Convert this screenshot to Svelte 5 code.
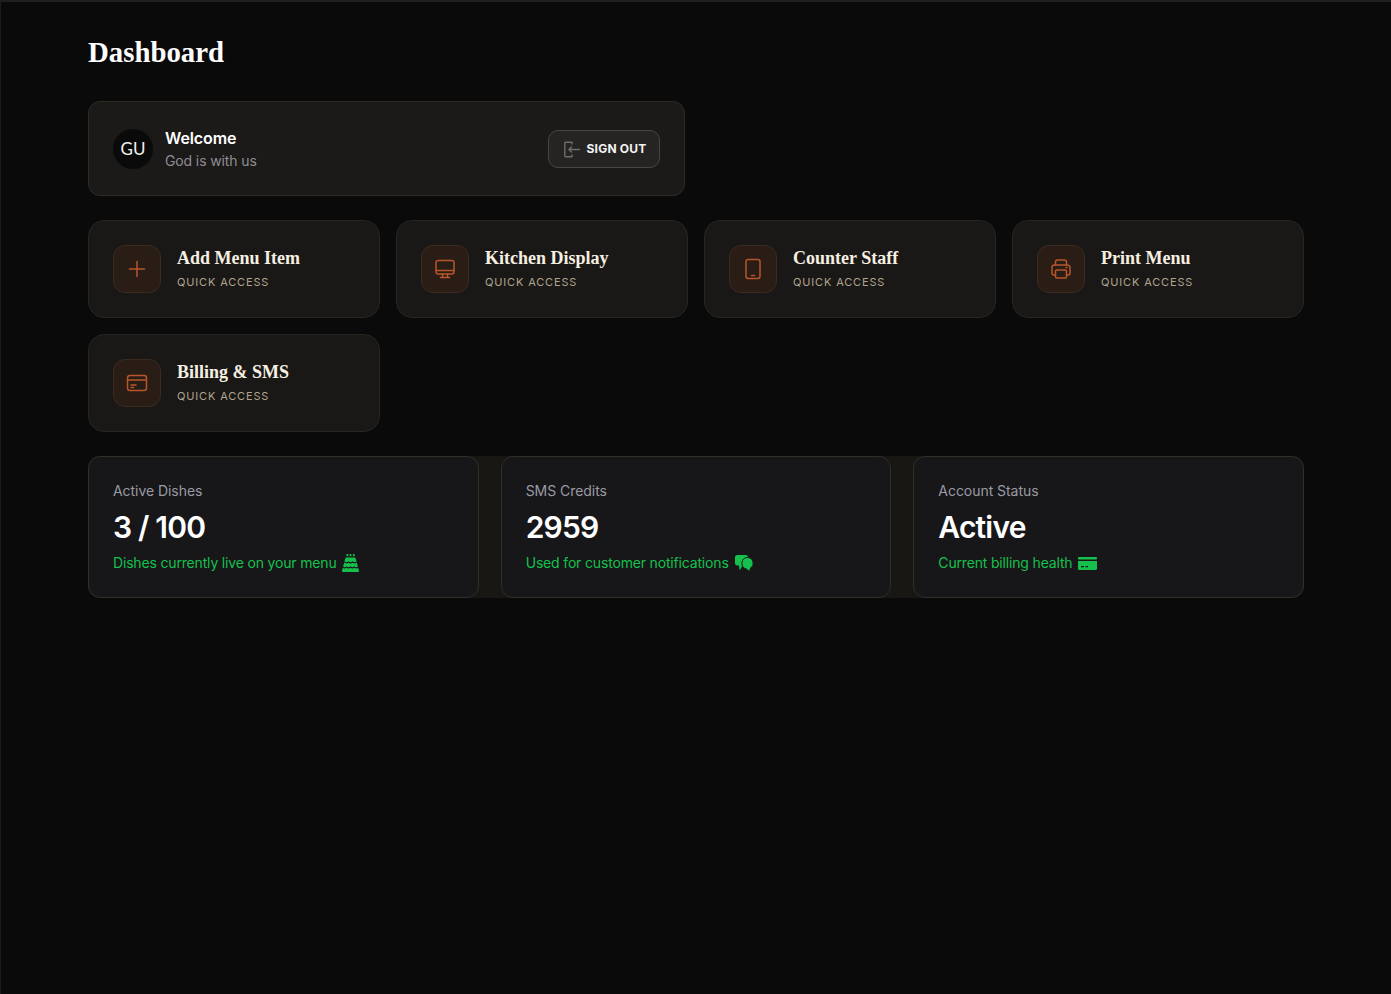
<script lang="ts">
	type Action = { title: string; icon: string };
	type Stat = { label: string; value: string; note: string; icon: string };

	const actions: Action[] = [
		{ title: 'Add Menu Item', icon: 'plus' },
		{ title: 'Kitchen Display', icon: 'monitor' },
		{ title: 'Counter Staff', icon: 'tablet' },
		{ title: 'Print Menu', icon: 'printer' },
		{ title: 'Billing & SMS', icon: 'card' }
	];

	const stats: Stat[] = [
		{ label: 'Active Dishes', value: '3 / 100', note: 'Dishes currently live on your menu', icon: 'cake' },
		{ label: 'SMS Credits', value: '2959', note: 'Used for customer notifications', icon: 'chat' },
		{ label: 'Account Status', value: 'Active', note: 'Current billing health', icon: 'billing' }
	];
</script>

<main class="page">
	<h1>Dashboard</h1>

	<section class="welcome">
		<div class="user">
			<div class="avatar">GU</div>
			<div>
				<div class="hello">Welcome</div>
				<div class="sub">God is with us</div>
			</div>
		</div>
		<button class="signout">
			<svg width="20" height="20" viewBox="0 0 20 20" fill="none" stroke="#6f6d6b" stroke-width="1.4" stroke-linecap="round" stroke-linejoin="round">
				<path d="M10 5V3.2H3.6a.8.8 0 0 0-.8.8v13a.8.8 0 0 0 .8.8H10V16" />
				<path d="M17.5 10.5H7M9.5 8l-2.6 2.5L9.5 13" />
			</svg>
			SIGN OUT
		</button>
	</section>

	<section class="actions">
		{#each actions as action}
			<div class="action">
				<div class="action-icon">
					<svg width="24" height="24" viewBox="0 0 24 24" fill="none" stroke="currentColor" stroke-width="1.5" stroke-linecap="round" stroke-linejoin="round">
						{#if action.icon === 'plus'}
							<path d="M12 4.5v15M4.5 12h15" />
						{:else if action.icon === 'monitor'}
							<rect x="3" y="3.5" width="18" height="13.5" rx="2.2" />
							<path d="M3 13.5h18M9.5 17v3M14.5 17v3M7.5 20.5h9" />
						{:else if action.icon === 'tablet'}
							<rect x="5" y="2.5" width="14" height="19" rx="2.2" />
							<path d="M10.5 18.5h3" />
						{:else if action.icon === 'printer'}
							<path d="M6.5 8V5a2 2 0 0 1 2-2h7a2 2 0 0 1 2 2v3" />
							<path d="M6.5 18H5a2 2 0 0 1-2-2v-5.5A2.5 2.5 0 0 1 5.5 8h13a2.5 2.5 0 0 1 2.5 2.5V16a2 2 0 0 1-2 2h-1.500" />
							<rect x="6.5" y="13" width="11" height="8" rx="1" />
							<path d="M17 10.5h1" />
						{:else}
							<rect x="2.5" y="4.5" width="19" height="15" rx="2.5" />
							<path d="M2.5 9h19M6 14h5M6 16.5h2.5" />
						{/if}
					</svg>
				</div>
				<div class="action-text">
					<div class="action-title">{action.title}</div>
					<div class="action-sub">QUICK ACCESS</div>
				</div>
			</div>
		{/each}
	</section>

	<section class="stats">
		{#each stats as stat}
			<div class="stat">
				<div class="stat-label">{stat.label}</div>
				<div class="stat-value">{stat.value}</div>
				<div class="stat-note">
					{stat.note}
					<svg width="20" height="20" viewBox="0 0 20 20" fill="#16c04c">
						{#if stat.icon === 'cake'}
							<path d="M5.500 1h1.700v2.300H5.500zM8.700 1h1.700v2.300H8.700zM11.900 1h1.700v2.300h-1.700z" />
							<path d="M5.500 4.500h8c.6 0 1 .4 1.200 1l3.100 11.500V19H1.200v-2L4.300 5.500c.2-.6.600-1 1.200-1z" />
							<path d="M3.500 9c1.500 1.100 2.700 1.100 4 0 1.300 1.100 2.700 1.100 4 0 1.300 1.100 2.500 1.100 4 0M1.500 14c1.800 1.100 3.200 1.100 4 0 1.300 1.100 2.700 1.100 4 0 1.300 1.100 2.700 1.100 4 0 .8 1.100 2.200 1.100 4 0" fill="none" stroke="#17171a" stroke-width="1.100" />
						{:else if stat.icon === 'chat'}
							<path d="M1 4.500A2.500 2.500 0 0 1 3.500 2h8A2.500 2.500 0 0 1 14 4.500V10a2.500 2.500 0 0 1-2.500 2.500H8.500L5.800 17.500 5 12.500H3.500A2.500 2.500 0 0 1 1 10z" />
							<path d="M13.500 4.500a5.800 5.800 0 0 1 3 10.700L15.500 18.500l-3.300-2.600A5.800 5.800 0 0 1 13.500 4.500z" stroke="#17171a" stroke-width="1" />
						{:else}
							<rect x="1" y="4" width="19" height="2.400" rx="1" />
							<path d="M1 8h19v7.500a1.500 1.500 0 0 1-1.500 1.500h-16A1.500 1.500 0 0 1 1 15.500zm3 5v1.200h3V13zm4.500 0v1.200H11V13z" fill-rule="evenodd" />
						{/if}
					</svg>
				</div>
			</div>
		{/each}
	</section>
</main>

<style>
	:global(body) {
		background: #0a0a0a;
		font-family: Inter, 'Liberation Sans', sans-serif;
	}

	.page {
		box-sizing: border-box;
		min-height: 994px;
		padding: 33px 87px 0 87px;
		border-top: 2px solid #1f1f1f;
		border-left: 1px solid #1c1c1c;
	}

	h1 {
		margin: 0;
		font-family: 'Liberation Serif', serif;
		font-size: 28.8px;
		line-height: 34px;
		font-weight: 700;
		color: #fff;
	}

	.welcome {
		box-sizing: border-box;
		width: 597px;
		height: 95px;
		margin-top: 32px;
		padding: 0 24px;
		display: flex;
		align-items: center;
		justify-content: space-between;
		background: #1c1a18;
		border: 1px solid #2e2924;
		border-radius: 12px;
	}

	.user {
		display: flex;
		align-items: center;
		gap: 12px;
	}

	.avatar {
		width: 40px;
		height: 40px;
		border-radius: 50%;
		background: #0a0a0a;
		color: #f2f2f2;
		font-family: Lato, sans-serif;
		font-size: 17px;
		display: flex;
		align-items: center;
		justify-content: center;
	}

	.hello {
		font-size: 16px;
		line-height: 22px;
		font-weight: 600;
		color: #fff;
		letter-spacing: -0.1px;
	}

	.sub {
		margin-top: 2px;
		font-size: 14px;
		line-height: 20px;
		color: #8f8d94;
		letter-spacing: -0.12px;
	}

	.signout {
		box-sizing: border-box;
		width: 112px;
		height: 38px;
		display: flex;
		align-items: center;
		justify-content: center;
		gap: 5px;
		background: #252422;
		border: 1px solid #484644;
		border-radius: 10px;
		color: #f4f4f4;
		font-family: inherit;
		font-size: 12px;
		font-weight: 700;
		letter-spacing: 0.2px;
	}

	.actions {
		margin-top: 24px;
		display: grid;
		grid-template-columns: repeat(4, 292px);
		gap: 16px;
	}

	.action {
		box-sizing: border-box;
		height: 98px;
		padding: 0 24px;
		display: flex;
		align-items: center;
		gap: 16px;
		background: #1a1816;
		border: 1px solid #29241f;
		border-radius: 16px;
	}

	.action-icon {
		box-sizing: border-box;
		width: 48px;
		height: 48px;
		display: flex;
		align-items: center;
		justify-content: center;
		color: #b6562a;
		background: #2a1d16;
		border: 1px solid #3b2a20;
		border-radius: 12px;
	}

	.action-text {
		margin-top: -2px;
	}

	.action-title {
		font-family: 'Liberation Serif', serif;
		font-size: 18px;
		line-height: 24px;
		font-weight: 700;
		color: #f6efe2;
	}

	.action-sub {
		margin-top: 4px;
		font-size: 11px;
		line-height: 16px;
		letter-spacing: 0.85px;
		color: #b0a48f;
	}

	.stats {
		margin-top: 24px;
		display: grid;
		grid-template-columns: repeat(3, 1fr);
		gap: 22px;
		background: #191714;
		border-radius: 12px;
	}

	.stat {
		box-sizing: border-box;
		height: 142px;
		padding: 24px;
		background: #17171a;
		border: 1px solid #322e28;
		border-radius: 12px;
	}

	.stat-label {
		font-size: 14px;
		line-height: 20px;
		color: #9a9aa2;
		letter-spacing: -0.05px;
	}

	.stat-value {
		margin-top: 6px;
		font-size: 30px;
		line-height: 40px;
		font-weight: 600;
		color: #fff;
		letter-spacing: -0.8px;
	}

	.stat-note {
		margin-top: 6px;
		display: flex;
		align-items: center;
		gap: 5px;
		font-size: 14px;
		line-height: 20px;
		color: #16c04c;
		letter-spacing: -0.17px;
	}
</style>
